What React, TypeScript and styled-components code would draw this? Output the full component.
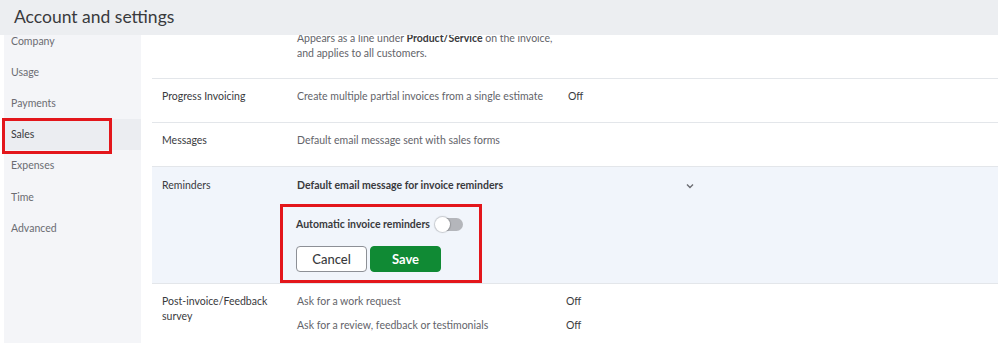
import styled, { createGlobalStyle } from 'styled-components';

const GlobalStyle = createGlobalStyle`
  html, body {
    margin: 0;
    padding: 0;
    background: #ffffff;
  }
  body {
    font-family: Lato, "Open Sans", Arial, sans-serif;
    color: #393a3d;
    overflow: hidden;
  }
`;

const navItems = ['Company', 'Usage', 'Payments', 'Sales', 'Expenses', 'Time', 'Advanced'];

export default function App() {
  return (
    <Page>
      <GlobalStyle />
      <Header>Account and settings</Header>
      <Body>
        <Sidebar>
          <NavList>
            {navItems.map((item) => (
              <NavItem key={item} $active={item === 'Sales'}>
                {item}
                {item === 'Sales' && <NavMarker />}
              </NavItem>
            ))}
          </NavList>
        </Sidebar>
        <Main>
          <Row $first>
            <Label />
            <Description>
              Appears as a line under <strong>Product/Service</strong> on the invoice,
              <br />
              and applies to all customers.
            </Description>
          </Row>
          <Row>
            <Label>Progress Invoicing</Label>
            <Description>Create multiple partial invoices from a single estimate</Description>
            <Value>Off</Value>
          </Row>
          <Row>
            <Label>Messages</Label>
            <Description>Default email message sent with sales forms</Description>
          </Row>
          <Row $open>
            <Label>Reminders</Label>
            <ReminderColumn>
              <ReminderHead>
                <span>Default email message for invoice reminders</span>
                <Chevron viewBox="0 0 8 6" aria-hidden>
                  <path d="M1 1.5 L4 4.5 L7 1.5" fill="none" stroke="#6b6c72" strokeWidth="1.4" />
                </Chevron>
              </ReminderHead>
              <ReminderPanel>
                <ToggleLine>
                  Automatic invoice reminders
                  <Toggle>
                    <Knob />
                  </Toggle>
                </ToggleLine>
                <Buttons>
                  <Button>Cancel</Button>
                  <Button $primary>Save</Button>
                </Buttons>
              </ReminderPanel>
            </ReminderColumn>
          </Row>
          <Row $last>
            <Label>
              Post-invoice/Feedback
              <br />
              survey
            </Label>
            <Stack>
              <SubRow>
                <Description>Ask for a work request</Description>
                <Value $shift>Off</Value>
              </SubRow>
              <SubRow>
                <Description>Ask for a review, feedback or testimonials</Description>
                <Value $shift>Off</Value>
              </SubRow>
            </Stack>
          </Row>
        </Main>
      </Body>
    </Page>
  );
}

const Page = styled.div`
  width: 998px;
  height: 343px;
  display: flex;
  flex-direction: column;
  overflow: hidden;
`;

const Header = styled.div`
  height: 35px;
  flex-shrink: 0;
  background: #eceef1;
  padding-left: 14px;
  font-size: 17.5px;
  line-height: 34px;
  color: #393a3d;
  position: relative;
  z-index: 2;
`;

const Body = styled.div`
  flex: 1;
  display: flex;
  min-height: 0;
`;

const Sidebar = styled.nav`
  width: 137px;
  margin-left: 4px;
  background: #f4f5f8;
`;

const NavList = styled.div`
  display: flex;
  flex-direction: column;
  margin-top: -10px;
`;

const NavItem = styled.div<{ $active?: boolean }>`
  position: relative;
  height: 31.2px;
  flex-shrink: 0;
  padding-left: 7px;
  font-size: 10.5px;
  display: flex;
  align-items: center;
  color: ${(p) => (p.$active ? '#393a3d' : '#6b6c72')};
  background: ${(p) => (p.$active ? '#ebedf1' : 'transparent')};
`;

const NavMarker = styled.span`
  position: absolute;
  left: -2px;
  top: -1px;
  width: 110px;
  height: 36px;
  border: 3px solid #e3161b;
  box-sizing: border-box;
`;

const Main = styled.main`
  flex: 1;
  padding-left: 11px;
  display: flex;
  flex-direction: column;
`;

const Row = styled.div<{ $first?: boolean; $open?: boolean; $last?: boolean }>`
  display: flex;
  align-items: flex-start;
  padding: ${(p) => (p.$first ? '0 0 17px' : p.$open ? '11px 0 0' : '10px 0 18px')};
  margin-top: ${(p) => (p.$first ? '-4px' : '0')};
  border-bottom: ${(p) => (p.$last ? 'none' : '1px solid #e3e6ea')};
  background: ${(p) => (p.$open ? '#f1f5fb' : 'transparent')};
  font-size: 10.5px;
  line-height: 15px;
`;

const Label = styled.div`
  width: 135px;
  padding-left: 10px;
  flex-shrink: 0;
  color: #393a3d;
`;

const Description = styled.div`
  width: 271px;
  flex-shrink: 0;
  color: #63646a;
  strong {
    color: #393a3d;
    font-weight: 700;
  }
`;

const Value = styled.div<{ $shift?: boolean }>`
  color: #393a3d;
  margin-left: ${(p) => (p.$shift ? '-2px' : '0')};
`;

const Stack = styled.div`
  display: flex;
  flex-direction: column;
  gap: 9px;
`;

const SubRow = styled.div`
  display: flex;
`;

const ReminderColumn = styled.div`
  display: flex;
  flex-direction: column;
`;

const ReminderHead = styled.div`
  width: 400px;
  display: flex;
  justify-content: space-between;
  align-items: center;
  font-weight: 700;
  color: #393a3d;
  padding-bottom: 11px;
`;

const Chevron = styled.svg`
  width: 8px;
  height: 6px;
  margin-right: 3px;
`;

const ReminderPanel = styled.div`
  margin-left: -17px;
  width: 202px;
  box-sizing: border-box;
  border: 3px solid #e3161b;
  padding: 10px 0 8px 13px;
  display: flex;
  flex-direction: column;
  gap: 14px;
`;

const ToggleLine = styled.div`
  display: flex;
  align-items: center;
  gap: 6px;
  font-weight: 700;
  color: #393a3d;
  line-height: 15px;
`;

const Toggle = styled.span`
  width: 27px;
  height: 13px;
  border-radius: 7px;
  background: #b4b6bb;
  position: relative;
  display: inline-block;
`;

const Knob = styled.span`
  position: absolute;
  left: -1px;
  top: -1px;
  width: 15px;
  height: 15px;
  border-radius: 50%;
  background: #ffffff;
  box-shadow: 0 0 1px 1px rgba(0, 0, 0, 0.18);
`;

const Buttons = styled.div`
  display: flex;
  gap: 3px;
`;

const Button = styled.button<{ $primary?: boolean }>`
  width: 71px;
  height: 26px;
  border-radius: 4px;
  font-family: Lato, "Open Sans", Arial, sans-serif;
  font-size: 13px;
  font-weight: ${(p) => (p.$primary ? 700 : 500)};
  color: ${(p) => (p.$primary ? '#ffffff' : '#393a3d')};
  background: ${(p) => (p.$primary ? '#108a34' : '#ffffff')};
  border: 1px solid ${(p) => (p.$primary ? '#108a34' : '#8d9096')};
  padding: 0;
  cursor: pointer;
`;
